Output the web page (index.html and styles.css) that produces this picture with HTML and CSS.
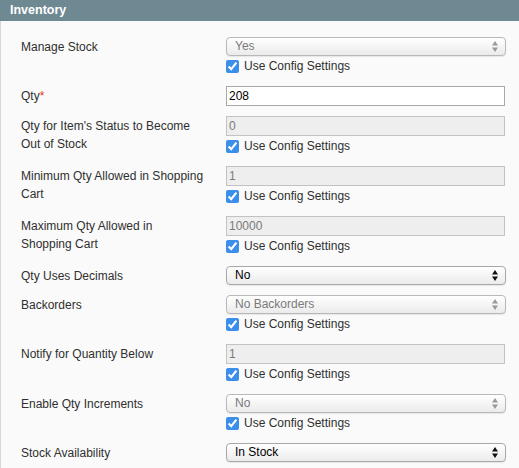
FILE: index.html
```html
<!DOCTYPE html>
<html lang="en">
<head>
    <meta charset="UTF-8">
    <title>Inventory</title>
    <link rel="stylesheet" href="styles.css">
</head>
<body>

<div class="entry-edit">
    <div class="entry-edit-head">
        <h4>Inventory</h4>
    </div>
    <div class="fieldset">

        <div class="row">
            <label class="label">Manage Stock</label>
            <div class="value">
                <div class="select-wrap">
                    <select class="select" disabled><option>Yes</option></select>
                    <svg class="arrows" width="6" height="11" viewBox="0 0 6 11"><polygon points="0,4.5 3,0 6,4.5"/><polygon points="0,6.5 6,6.5 3,11"/></svg>
                </div>
                <label class="config"><input type="checkbox" checked> Use Config Settings</label>
            </div>
        </div>

        <div class="row">
            <label class="label">Qty<span class="required">*</span></label>
            <div class="value">
                <input class="input-text" type="text" value="208">
            </div>
        </div>

        <div class="row">
            <label class="label">Qty for Item's Status to Become Out of Stock</label>
            <div class="value">
                <input class="input-text" type="text" value="0" disabled>
                <label class="config"><input type="checkbox" checked> Use Config Settings</label>
            </div>
        </div>

        <div class="row">
            <label class="label">Minimum Qty Allowed in Shopping Cart</label>
            <div class="value">
                <input class="input-text" type="text" value="1" disabled>
                <label class="config"><input type="checkbox" checked> Use Config Settings</label>
            </div>
        </div>

        <div class="row">
            <label class="label">Maximum Qty Allowed in Shopping Cart</label>
            <div class="value">
                <input class="input-text" type="text" value="10000" disabled>
                <label class="config"><input type="checkbox" checked> Use Config Settings</label>
            </div>
        </div>

        <div class="row">
            <label class="label">Qty Uses Decimals</label>
            <div class="value">
                <div class="select-wrap active">
                    <select class="select"><option>No</option><option>Yes</option></select>
                    <svg class="arrows" width="6" height="11" viewBox="0 0 6 11"><polygon points="0,4.5 3,0 6,4.5"/><polygon points="0,6.5 6,6.5 3,11"/></svg>
                </div>
            </div>
        </div>

        <div class="row">
            <label class="label">Backorders</label>
            <div class="value">
                <div class="select-wrap">
                    <select class="select" disabled><option>No Backorders</option></select>
                    <svg class="arrows" width="6" height="11" viewBox="0 0 6 11"><polygon points="0,4.5 3,0 6,4.5"/><polygon points="0,6.5 6,6.5 3,11"/></svg>
                </div>
                <label class="config"><input type="checkbox" checked> Use Config Settings</label>
            </div>
        </div>

        <div class="row">
            <label class="label">Notify for Quantity Below</label>
            <div class="value">
                <input class="input-text" type="text" value="1" disabled>
                <label class="config"><input type="checkbox" checked> Use Config Settings</label>
            </div>
        </div>

        <div class="row">
            <label class="label">Enable Qty Increments</label>
            <div class="value">
                <div class="select-wrap">
                    <select class="select" disabled><option>No</option></select>
                    <svg class="arrows" width="6" height="11" viewBox="0 0 6 11"><polygon points="0,4.5 3,0 6,4.5"/><polygon points="0,6.5 6,6.5 3,11"/></svg>
                </div>
                <label class="config"><input type="checkbox" checked> Use Config Settings</label>
            </div>
        </div>

        <div class="row">
            <label class="label">Stock Availability</label>
            <div class="value">
                <div class="select-wrap active">
                    <select class="select"><option>In Stock</option><option>Out of Stock</option></select>
                    <svg class="arrows" width="6" height="11" viewBox="0 0 6 11"><polygon points="0,4.5 3,0 6,4.5"/><polygon points="0,6.5 6,6.5 3,11"/></svg>
                </div>
            </div>
        </div>

    </div>
</div>

</body>
</html>
```

FILE: styles.css
```css
body {
    margin: 0;
    padding: 0;
    font-family: "Liberation Sans", Arial, sans-serif;
    font-size: 12px;
    color: #2f2f2f;
    background: #fafafa;
    overflow: hidden;
}
.entry-edit-head {
    background-color: #6f8992;
    height: 21px;
    padding: 0 10px;
}
.entry-edit-head h4 {
    margin: 0;
    color: #fff;
    font-size: 12.5px;
    font-weight: bold;
    line-height: 21px;
}
.fieldset {
    background-color: #fafafa;
    border-left: 1px solid #d6d6d6;
    padding: 16px 0 10px 20px;
    min-height: 420px;
}
.row {
    display: grid;
    grid-template-columns: 205px 280px;
    padding-bottom: 10px;
}
.label {
    width: 184px;
    padding-top: 1px;
    line-height: 18px;
}
.required {
    color: #eb340a;
}
.value {
    display: flex;
    flex-direction: column;
}
.input-text {
    box-sizing: border-box;
    width: 279px;
    height: 20px;
    margin: 0;
    padding: 0 2px;
    border: 1px solid #a9a9a9;
    background: #fff;
    font-family: inherit;
    font-size: 12px;
    color: #000;
}
.input-text:disabled {
    background: #eeeeee;
    border-color: #c2c2c2;
    color: #7a7a7a;
    -webkit-text-fill-color: #7a7a7a;
    opacity: 1;
}
.select-wrap {
    position: relative;
    width: 280px;
    height: 19px;
}
.select {
    -webkit-appearance: none;
    appearance: none;
    box-sizing: border-box;
    width: 280px;
    height: 19px;
    margin: 0;
    padding: 0 0 0 8px;
    border: 1px solid #b8b8b8;
    border-radius: 4px;
    background: linear-gradient(#ffffff, #ebebeb);
    box-shadow: 0 1px 1px rgba(0, 0, 0, 0.08);
    font-family: inherit;
    font-size: 12px;
    color: #7a7a7a;
    line-height: 17px;
    opacity: 1;
}
.select:disabled {
    opacity: 1;
    color: #7a7a7a;
}
.active .select {
    color: #000;
    border-color: #a8a8a8;
}
.arrows {
    position: absolute;
    right: 8px;
    top: 4px;
    fill: #999;
}
.active .arrows {
    fill: #111;
}
.config {
    display: flex;
    align-items: center;
    height: 20px;
    font-size: 12px;
    color: #2f2f2f;
}
.config input {
    width: 13px;
    height: 13px;
    margin: 0 5px 0 0;
    accent-color: #3b8eea;
}
```
